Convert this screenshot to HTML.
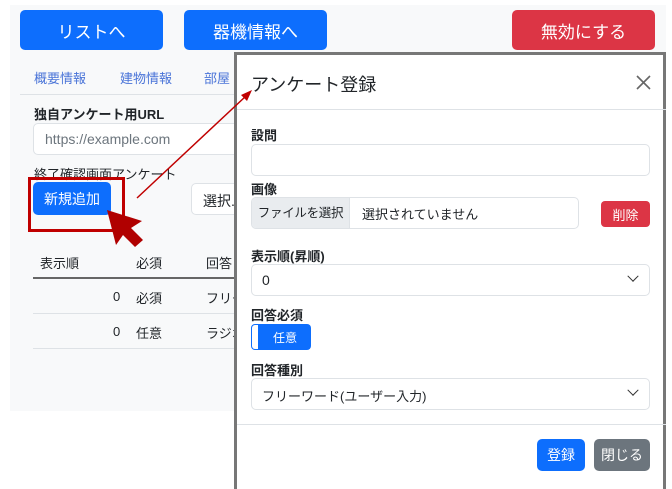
<!DOCTYPE html><html><head><meta charset="utf-8"><style>
*{box-sizing:border-box;margin:0;padding:0}
body{width:672px;height:489px;background:#fff;font-family:"Liberation Sans","Noto Sans CJK JP",sans-serif;position:relative;overflow:hidden;color:#212529;font-size:14px}
.a{position:absolute}
.bg{left:10px;top:5px;width:656px;height:406px;background:#f8f9fa}
.btn{position:absolute;border-radius:5px;color:#fff;display:flex;align-items:center;justify-content:center}
.blue{background:#0d6efd}.red{background:#dc3545}.gray{background:#6c757d}
.inp{position:absolute;background:#fff;border:1px solid #dee2e6;border-radius:5px}
.lbl{position:absolute;font-weight:bold;font-size:13px}
.chev{position:absolute;right:12px;top:50%;margin-top:-5px;width:8px;height:8px;border-right:1.5px solid #333;border-bottom:1.5px solid #333;transform:rotate(45deg) translate(-2px,-2px)}
</style></head><body>
<div class="a bg"></div>
<div class="btn blue" style="left:20px;top:10px;width:143px;height:40px;font-size:17px">リストへ</div>
<div class="btn blue" style="left:184px;top:10px;width:143px;height:40px;font-size:17px">器機情報へ</div>
<div class="btn red" style="left:512px;top:10px;width:143px;height:40px;font-size:17px">無効にする</div>
<div class="a" style="left:34px;top:68px;color:#4a74d8;font-size:13px">概要情報</div>
<div class="a" style="left:120px;top:68px;color:#4a74d8;font-size:13px">建物情報</div>
<div class="a" style="left:204px;top:68px;color:#4a74d8;font-size:13px">部屋</div>
<div class="a" style="left:20px;top:94px;width:220px;height:1px;background:#dee2e6"></div>
<div class="lbl" style="left:34px;top:104px">独自アンケート用URL</div>
<div class="inp" style="left:33px;top:123px;width:220px;height:32px"><span style="position:absolute;left:11px;top:7px;color:#6c757d;font-size:14px">https://example.com</span></div>
<div class="a" style="left:34px;top:164px;font-size:13px">終了確認画面アンケート</div>
<div class="btn blue" style="left:33px;top:182px;width:78px;height:33px;font-size:14px">新規追加</div>
<div class="a" style="left:28px;top:177px;width:97px;height:55px;border:3px solid #c00000"></div>
<div class="inp" style="left:191px;top:183px;width:60px;height:32px"><span style="position:absolute;left:11px;top:7px">選択.</span></div>
<div class="a" style="left:40px;top:253px;font-size:13px">表示順</div>
<div class="a" style="left:136px;top:253px;font-size:13px">必須</div>
<div class="a" style="left:206px;top:253px;font-size:13px">回答</div>
<div class="a" style="left:33px;top:277px;width:210px;height:2px;background:#666"></div>
<div class="a" style="left:113px;top:289px;font-size:13px">0</div><div class="a" style="left:136px;top:288px;font-size:13px">必須</div><div class="a" style="left:206px;top:288px;font-size:13px">フリー</div>
<div class="a" style="left:33px;top:313px;width:210px;height:1px;background:#dee2e6"></div>
<div class="a" style="left:113px;top:324px;font-size:13px">0</div><div class="a" style="left:136px;top:323px;font-size:13px">任意</div><div class="a" style="left:206px;top:323px;font-size:13px">ラジオ</div>
<div class="a" style="left:33px;top:348px;width:210px;height:1px;background:#dee2e6"></div>
<div class="a" style="left:234px;top:52px;width:432px;height:437px;background:#fff;border:3px solid #777;border-bottom:none"></div>
<div class="a" style="left:251px;top:71px;font-size:18px">アンケート登録</div>
<svg class="a" style="left:636px;top:75px" width="15" height="15"><path d="M1 1L14 14M14 1L1 14" stroke="#666" stroke-width="1.6"/></svg>
<div class="a" style="left:237px;top:109px;width:429px;height:1px;background:#dee2e6"></div>
<div class="lbl" style="left:251px;top:125px">設問</div>
<div class="inp" style="left:251px;top:144px;width:399px;height:32px"></div>
<div class="lbl" style="left:251px;top:179px">画像</div>
<div class="inp" style="left:251px;top:197px;width:328px;height:32px;overflow:hidden"><div style="position:absolute;left:0;top:0;width:98px;height:30px;background:#e9ecef;border-right:1px solid #dee2e6;font-size:12.5px;line-height:30px;text-align:center;white-space:nowrap;letter-spacing:-0.3px">ファイルを選択</div><span style="position:absolute;left:110px;top:6px;font-size:13px">選択されていません</span></div>
<div class="btn red" style="left:601px;top:201px;width:49px;height:26px;font-size:13px;border-radius:4px">削除</div>
<div class="lbl" style="left:251px;top:246px">表示順(昇順)</div>
<div class="inp" style="left:251px;top:264px;width:399px;height:32px"><span style="position:absolute;left:10px;top:7px">0</span><div class="chev"></div></div>
<div class="lbl" style="left:251px;top:305px">回答必須</div>
<div class="btn blue" style="left:251px;top:324px;width:60px;height:26px;font-size:12px;border-radius:4px;padding-left:8px">任意</div>
<div class="a" style="left:252px;top:325px;width:6px;height:24px;background:#fff;border-radius:3px 0 0 3px"></div>
<div class="lbl" style="left:251px;top:360px">回答種別</div>
<div class="inp" style="left:251px;top:378px;width:399px;height:32px"><span style="position:absolute;left:10px;top:7px;font-size:13px">フリーワード(ユーザー入力)</span><div class="chev"></div></div>
<div class="a" style="left:237px;top:424px;width:429px;height:1px;background:#dee2e6"></div>
<div class="btn blue" style="left:537px;top:439px;width:48px;height:32px">登録</div>
<div class="btn gray" style="left:594px;top:439px;width:56px;height:32px">閉じる</div>
<svg class="a" style="left:0;top:0" width="672" height="489">
<line x1="137" y1="198" x2="246" y2="96" stroke="#c00000" stroke-width="1.5"/>
<path d="M252 90L241 95L247 101Z" fill="#c00000"/>
<path d="M107 210L142 221L131 228L143 240L135 247L123 235L116 245Z" fill="#b00000"/>
</svg>
</body></html>
